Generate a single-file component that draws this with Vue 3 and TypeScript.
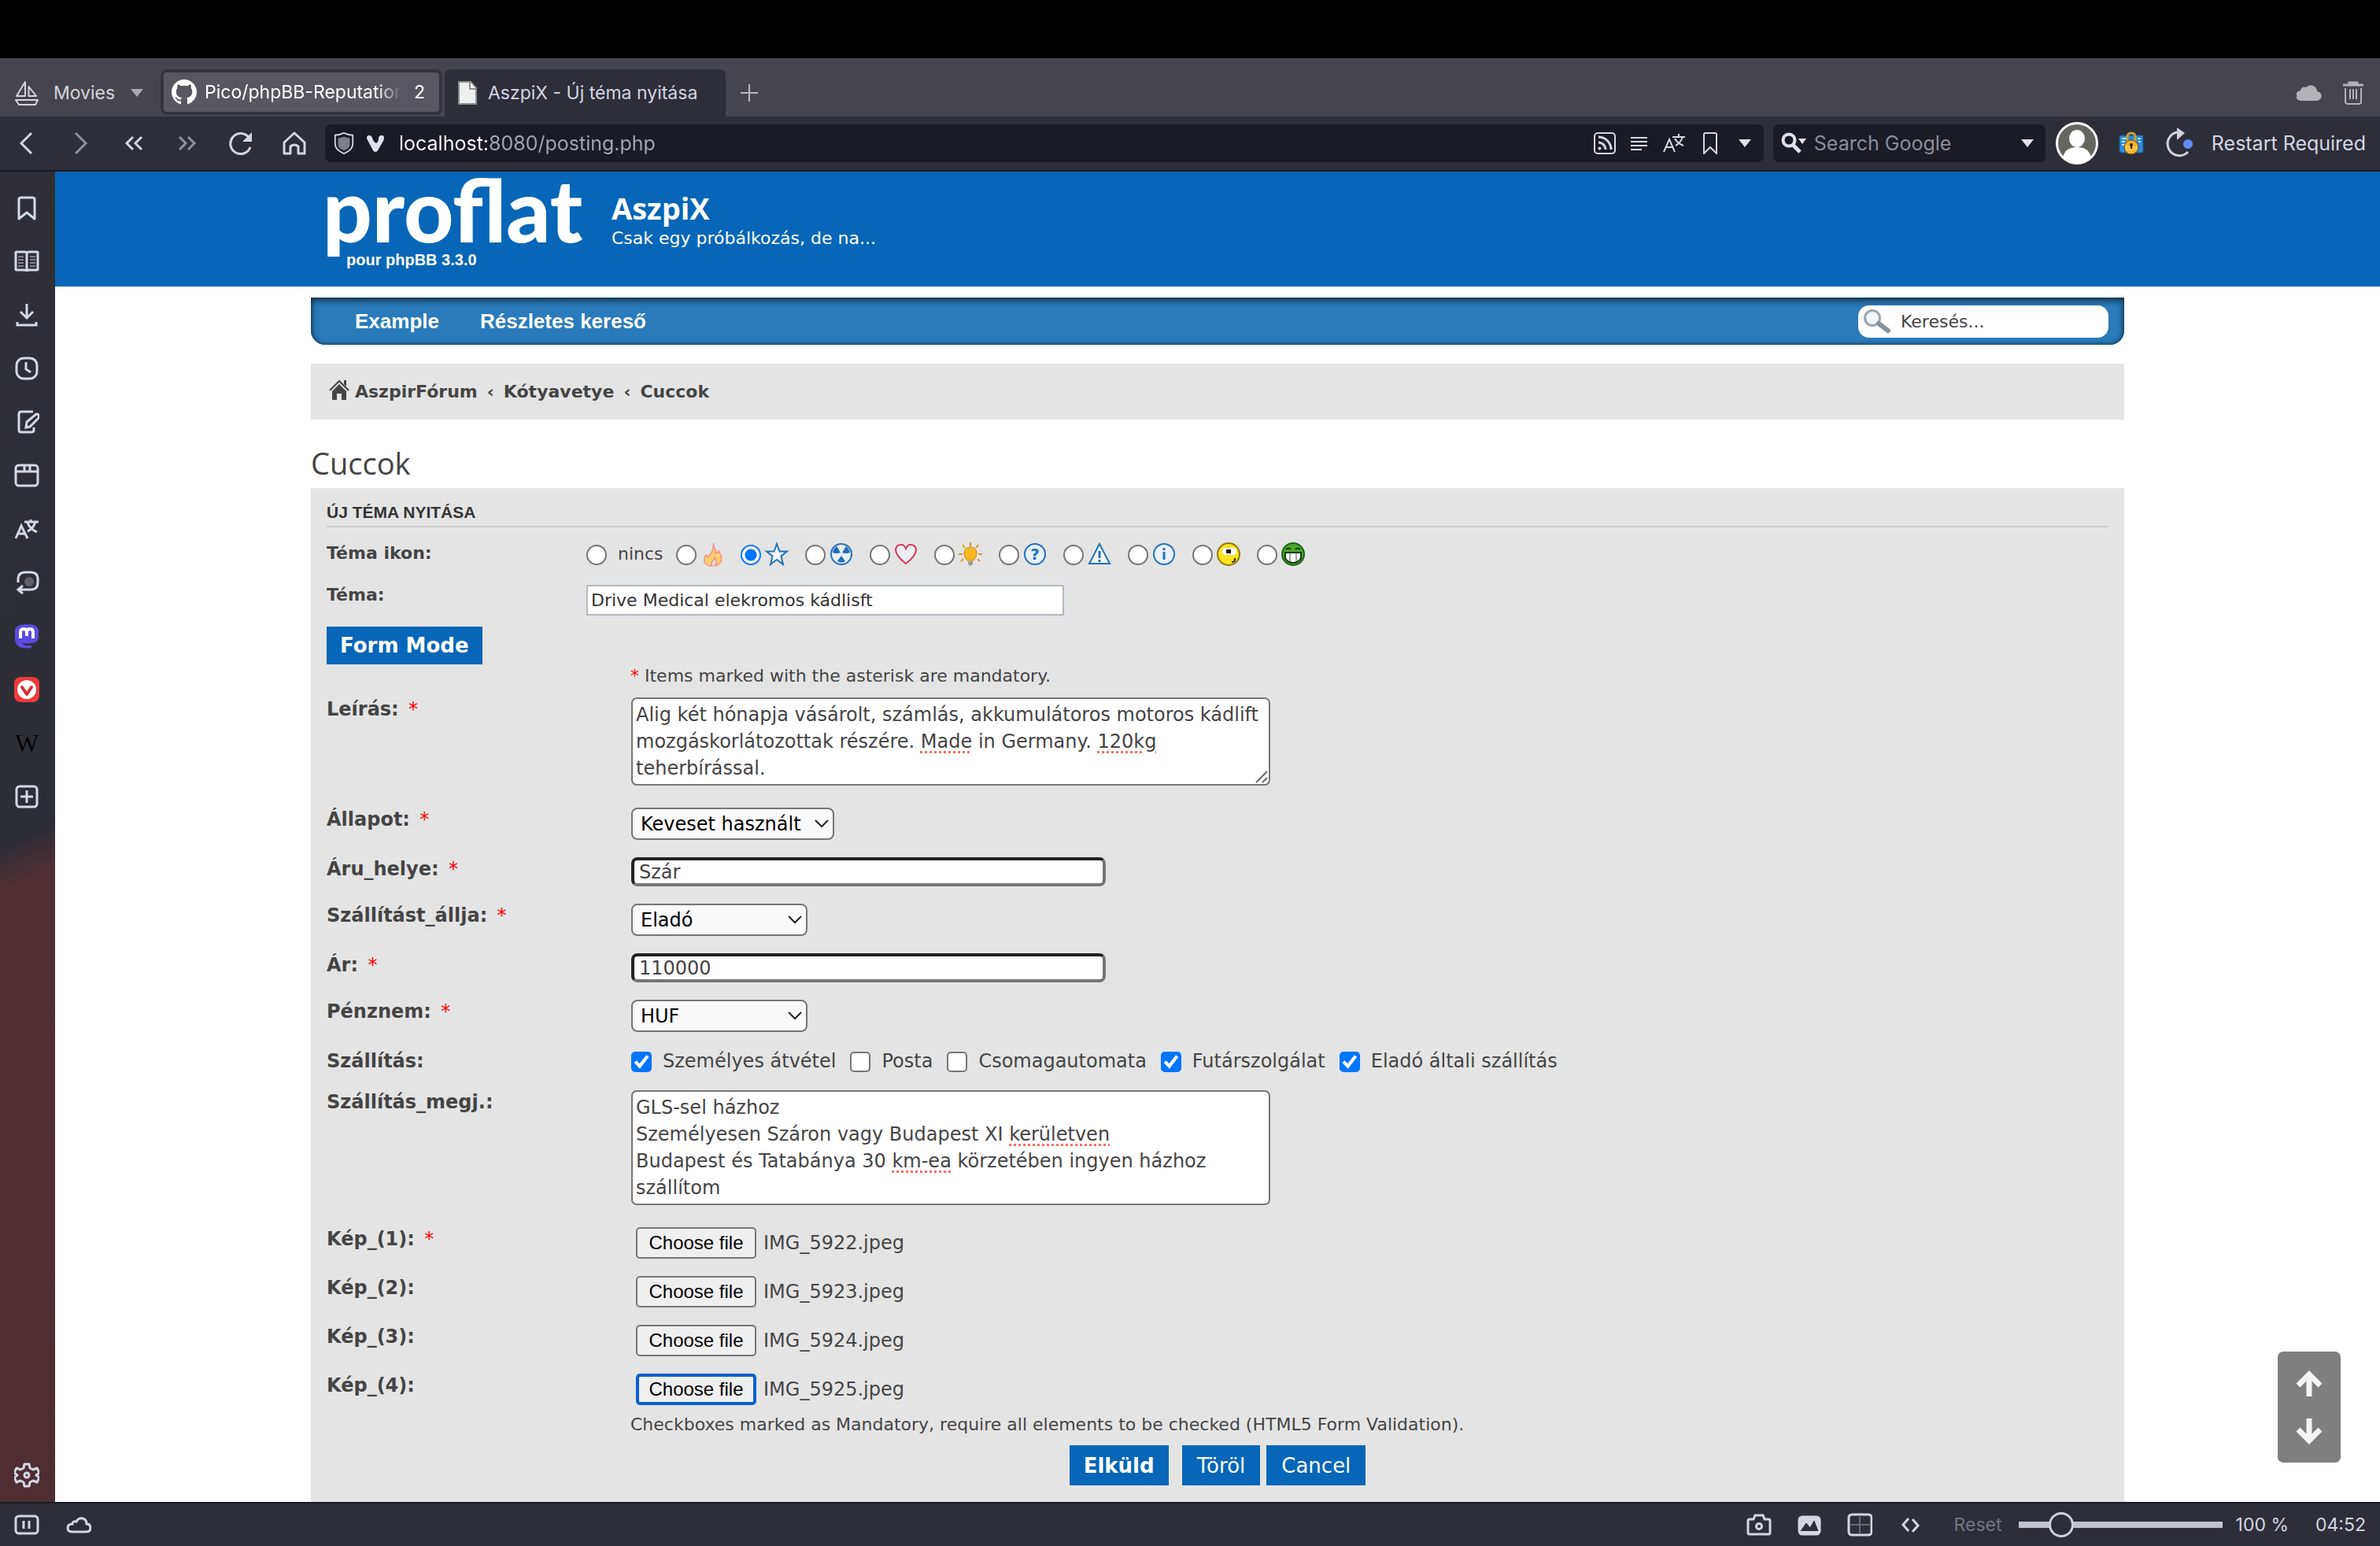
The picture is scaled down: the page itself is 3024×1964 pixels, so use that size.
<script setup lang="ts">
import { ref } from 'vue'

interface Shipping {
  label: string
  checked: boolean
}
interface FileRow {
  label: string
  required: boolean
  name: string
  focused: boolean
}

const tabTitle = ref('Drive Medical elekromos kádlisft')
const url = ref('localhost:8080/posting.php')
const topicIcon = ref('star')
const topicIcons: string[] = ['fire', 'star', 'radioactive', 'heart', 'idea', 'question', 'alert', 'info', 'smile', 'grin']
const place = ref('Szár')
const price = ref('110000')
const shipping = ref<Shipping[]>([
  { label: 'Személyes átvétel', checked: true },
  { label: 'Posta', checked: false },
  { label: 'Csomagautomata', checked: false },
  { label: 'Futárszolgálat', checked: true },
  { label: 'Eladó általi szállítás', checked: true },
])
const description = ref(
  'Alig két hónapja vásárolt, számlás, akkumulátoros motoros kádlift mozgáskorlátozottak részére. Made in Germany. 120kg teherbírással.',
)
const shippingNote = ref(
  'GLS-sel házhoz\nSzemélyesen Száron vagy Budapest XI kerületven\nBudapest és Tatabánya 30 km-ea körzetében ingyen házhoz szállítom',
)
const files: FileRow[] = [
  { label: 'Kép_(1):', required: true, name: 'IMG_5922.jpeg', focused: false },
  { label: 'Kép_(2):', required: false, name: 'IMG_5923.jpeg', focused: false },
  { label: 'Kép_(3):', required: false, name: 'IMG_5924.jpeg', focused: false },
  { label: 'Kép_(4):', required: false, name: 'IMG_5925.jpeg', focused: true },
]
const misspelled = ['Made', '120kg', 'kerületven', 'km-ea']

function spell(text: string): { text: string; bad: boolean }[] {
  return text.split(/(\s+|\.)/).map((part) => ({ text: part, bad: misspelled.includes(part) }))
}
</script>

<template>
  <div class="browser">
    <div class="notch"></div>

    <header class="tabs">
      <button class="workspace" type="button">
        <svg class="i32" viewBox="0 0 32 32" fill="none" stroke="currentColor" stroke-width="2">
          <path d="M14 2v18H3zM18.500 8v12H28zM2 25h28l-3 6H6z" stroke-linejoin="round" />
        </svg>
        <span>Movies</span>
        <svg class="tri" viewBox="0 0 16 12"><path d="M0 1h16L8 11z" fill="#a9a8ad" /></svg>
      </button>
      <button class="tab stacked" type="button">
        <span class="tab-face">
          <svg class="i32" viewBox="0 0 16 16" fill="#fff">
            <path d="M8 0C3.580 0 0 3.580 0 8c0 3.540 2.290 6.530 5.470 7.590.4.070.55-.17.55-.38 0-.19-.01-.82-.01-1.490-2.010.37-2.530-.49-2.690-.94-.09-.23-.48-.94-.82-1.130-.28-.15-.68-.52-.01-.53.63-.01 1.080.58 1.230.82.72 1.210 1.870.87 2.330.66.07-.52.28-.87.51-1.070-1.780-.2-3.640-.89-3.640-3.950 0-.87.31-1.590.82-2.150-.08-.2-.36-1.020.08-2.120 0 0 .67-.21 2.200.82.64-.18 1.320-.27 2-.27s1.360.09 2 .27c1.530-1.040 2.200-.82 2.200-.82.44 1.100.16 1.920.08 2.120.51.56.82 1.270.82 2.150 0 3.070-1.870 3.750-3.650 3.950.29.25.54.73.54 1.480 0 1.070-.01 1.930-.01 2.200 0 .21.15.46.55.38A8.010 8.010 0 0 0 16 8c0-4.420-3.580-8-8-8z" />
          </svg>
          <span class="tab-text fade">Pico/phpBB-Reputation</span>
          <span class="tab-count">2</span>
        </span>
      </button>
      <button class="tab active" type="button">
        <svg class="page-icon" viewBox="0 0 24 30">
          <path d="M1 1h15l7 8v20H1z" fill="#eee" stroke="#8d8d8d" stroke-width="2" />
          <path d="M15 1v9h8" fill="#fff" stroke="#8d8d8d" stroke-width="2" />
        </svg>
        <span class="tab-text">AszpiX - Új téma nyitása</span>
      </button>
      <button class="newtab" type="button" aria-label="New tab">
        <svg class="i24" viewBox="0 0 24 24"><path d="M12 1v22M1 12h22" stroke="#b9b8be" stroke-width="2" /></svg>
      </button>
      <div class="tabs-right">
        <svg class="i32" viewBox="0 0 32 32" fill="#b3b3b7"><path d="M7 26a7 6.500 0 0 1-2-13 5 5 0 0 1 7-4 8 8 0 0 1 14 5 6 6 0 0 1-1 12z" /></svg>
        <svg class="i32" viewBox="0 0 32 32" fill="none" stroke="#b3b3b7" stroke-width="2">
          <path d="M3 6h26M11 5V3h10v2" stroke-width="3" /><path d="M6 10v17q0 3 3 3h14q3 0 3-3V10M12 11v13M16 11v13M20 11v13" />
        </svg>
      </div>
    </header>

    <nav class="toolbar">
      <div class="nav-buttons">
        <button type="button" aria-label="Back"><svg class="i32" viewBox="0 0 32 32"><path d="M22 3 9 16l13 13" /></svg></button>
        <button type="button" aria-label="Forward" class="dim"><svg class="i32" viewBox="0 0 32 32"><path d="m10 3 13 13-13 13" /></svg></button>
        <button type="button" aria-label="Rewind"><svg class="i32" viewBox="0 0 32 32"><path d="m15 8-8 8 8 8M26 8l-8 8 8 8" /></svg></button>
        <button type="button" aria-label="Fast forward" class="dim"><svg class="i32" viewBox="0 0 32 32"><path d="m6 8 8 8-8 8M17 8l8 8-8 8" /></svg></button>
        <button type="button" aria-label="Reload"><svg class="i32" viewBox="0 0 32 32"><path d="M26 8.500A13 13 0 1 0 28 21" /><path d="M30 2v12H18z" fill="currentColor" stroke="none" /></svg></button>
        <button type="button" aria-label="Home"><svg class="i32" viewBox="0 0 32 32"><path d="M3 15 16 3l13 12v14h-8v-9q-5-4-10 0v9H3z" stroke-linejoin="round" /></svg></button>
      </div>
      <div class="field address">
        <svg class="i28" viewBox="0 0 28 30"><path d="M14 1c4 2 8 3 12 3v12c0 6-5 10-12 13C7 26 2 22 2 16V4c4 0 8-1 12-3z" fill="none" stroke="#cfd2de" stroke-width="2" /><path d="M14 6c2 1 5 2 8 2v9c0 4-3 6-8 8-5-2-8-4-8-8V8c3 0 6-1 8-2z" fill="#7d7d87" /></svg>
        <svg class="i24" viewBox="0 0 24 24"><path d="M1 5q0-3 3-3t4 3q1 5 5 7 3-2 3-6 0-4 4-4 3 0 3 3 0 2-1 4l-7 12q-1 2-3 2t-3-2L2 8Q1 6 1 5z" fill="#dfe2ee" /></svg>
        <input v-model="url" class="url" type="text" aria-label="Address" />
        <div class="field-icons">
          <svg class="i30" viewBox="0 0 30 30"><rect x="2" y="2" width="26" height="26" rx="4" /><path d="M7 7a16 16 0 0 1 16 16M7 14a9 9 0 0 1 9 9" stroke-width="3" /><circle cx="8.500" cy="21.500" r="2" fill="currentColor" stroke="none" /></svg>
          <svg class="i24" viewBox="0 0 24 24"><path d="M1 5h21M1 10h21M1 15h21M1 20h14" /></svg>
          <svg class="i30" viewBox="0 0 30 30"><path d="m2 26 7-16 7 16M5 20h8M13 7h16M21 3v4M26 7q-3 8-9 11M16 9q3 6 11 9" /></svg>
          <svg class="i28" viewBox="0 0 28 28"><path d="M6 3q0-2 2-2h12q2 0 2 2v24l-8-8-8 8z" /></svg>
          <svg class="tri" viewBox="0 0 16 12"><path d="M0 1h16L8 11z" fill="#dfe2ee" stroke="none" /></svg>
        </div>
      </div>
      <div class="field search">
        <svg class="i32" viewBox="0 0 32 30"><circle cx="10" cy="11" r="7.500" fill="none" stroke="#dfe2ee" stroke-width="4" /><path d="m15 17 9 9" stroke="#dfe2ee" stroke-width="5" /><path d="M22 9h10l-5 7z" fill="#dfe2ee" /></svg>
        <input type="text" placeholder="Search Google" aria-label="Search Google" />
        <svg class="tri" viewBox="0 0 16 12"><path d="M0 1h16L8 11z" fill="#dfe2ee" /></svg>
      </div>
      <svg class="avatar" viewBox="0 0 54 54"><circle cx="27" cy="27" r="25.500" fill="#666560" stroke="#fff" stroke-width="3" /><ellipse cx="27" cy="21" rx="10" ry="11" fill="#fff" /><path d="M9 45q3-13 18-13t18 13q-7 8-18 8T9 45z" fill="#fff" /></svg>
      <svg class="lock" viewBox="0 0 32 32">
        <rect x="1" y="6" width="30" height="22" rx="2" fill="#2b8ad8" stroke="#16518a" /><path d="M4 10h6M4 14h4M4 18h4M24 10h4M25 14h3" stroke="#bfe3ff" stroke-width="2" />
        <path d="M11 15V8q0-5 5-5t5 5v7" fill="none" stroke="#c7a436" stroke-width="3" /><circle cx="16" cy="21" r="9" fill="#f5b32c" stroke="#6f4a05" /><path d="M9 24h14M8 21h16" stroke="#ffe08a" /><circle cx="16" cy="18" r="2" fill="#3a2600" /><path d="M16 18v5" stroke="#3a2600" stroke-width="2" />
      </svg>
      <button class="restart" type="button">
        <svg class="i40" viewBox="0 0 40 40"><path d="M18 6A15 15 0 1 0 32 31" fill="none" stroke="#cfd2de" stroke-width="3" /><path d="m18 0 10 7-10 9z" fill="#cfd2de" /><circle cx="32" cy="21" r="6" fill="#5f8dfb" /></svg>
        <span>Restart Required</span>
      </button>
    </nav>

    <div class="middle">
      <aside class="panelbar">
        <button type="button" aria-label="Bookmarks"><svg viewBox="0 0 32 32"><path d="M6 5q0-2 3-2h14q3 0 3 2v25l-10-8-10 8z" stroke-linejoin="round" /></svg></button>
        <button type="button" aria-label="Reading list"><svg viewBox="0 0 32 32"><path d="M3 4h10q3 0 3 2 0-2 3-2h10q1 0 1 1v21q0 1-1 1H19q-3 0-3 2 0-2-3-2H3q-1 0-1-1V5q0-1 1-1zM16 6v22" /><path d="M5 10h7M5 14h7M5 18h7M5 22h7M20 10h7M20 14h7M20 18h7M20 22h7" stroke="#80808a" stroke-width="2" /></svg></button>
        <button type="button" aria-label="Downloads"><svg viewBox="0 0 32 32"><path d="M16 2v18M8 12l8 8 8-8M4 25v4h24v-4" /></svg></button>
        <button type="button" aria-label="History"><svg viewBox="0 0 32 32"><rect x="3" y="3" width="26" height="26" rx="9" /><path d="M15 8v9l6 4" /></svg></button>
        <button type="button" aria-label="Notes"><svg viewBox="0 0 32 32"><path d="M24 3H9Q6 3 6 6v20q0 3 3 3h13q3 0 3-3v-3M15 23l1-7L28 6q5 0 3 5L20 22z" /></svg></button>
        <button type="button" aria-label="Window"><svg viewBox="0 0 32 32"><rect x="2" y="3" width="28" height="26" rx="4" /><path d="M2 11h28M13 4v7M20 4v7" /></svg></button>
        <button type="button" aria-label="Translate"><svg viewBox="0 0 32 32"><path d="m2 28 7-16 8 16M5 22h9M13 7h18M21 4v3M27 7q-3 9-10 12M17 8q3 8 12 12" /></svg></button>
        <button type="button" aria-label="Sessions"><svg viewBox="0 0 32 32"><path d="M5 16v-4q0-9 9-9h7q9 0 9 9v4q0 9-9 9H6M11 20l-6 5 6 5" /><circle cx="19" cy="15" r="6" fill="#60606a" stroke="none" /></svg></button>
        <button type="button" aria-label="Mastodon"><svg viewBox="0 0 32 32"><path d="M1 10Q1 1 16 1t15 9v6q0 9-9 9-6 1-11 0 1 4 11 3v3Q2 34 1 20z" fill="#5b4be0" stroke="none" /><path d="M8 19v-8q0-4 4-4t4 4v5-5q0-4 4-4t4 4v8" stroke="#fff" stroke-width="4" /></svg></button>
        <button type="button" aria-label="Vivaldi"><svg viewBox="0 0 32 32"><rect width="32" height="32" rx="8" fill="#ef3a3a" stroke="none" /><circle cx="16" cy="16" r="12" fill="#fff" stroke="none" /><path d="m10 13 6 9 6-9" stroke="#d92f33" stroke-width="4" stroke-linecap="round" stroke-linejoin="round" /></svg></button>
        <button type="button" class="wiki" aria-label="Wikipedia">W</button>
        <button type="button" aria-label="Add panel"><svg viewBox="0 0 32 32"><rect x="3" y="3" width="26" height="26" rx="4" /><path d="M16 8v16M8 16h16" /></svg></button>
        <button type="button" class="settings" aria-label="Settings"><svg viewBox="0 0 32 32"><path d="M13 2h6l1 5 4 2 5-2 3 6-4 3 4 3-3 6-5-2-4 2-1 5h-6l-1-5-4-2-5 2-3-6 4-3-4-3 3-6 5 2 4-2z" stroke-linejoin="round" /><circle cx="16" cy="16" r="3" /></svg></button>
      </aside>

      <main class="page">
        <div class="headerbar">
          <div class="wrap brand">
            <a href="#" class="logo">
              <span class="logo-word">proflat</span>
              <span class="logo-sub">pour phpBB 3.3.0</span>
            </a>
            <div class="site">
              <h1>AszpiX</h1>
              <p>Csak egy próbálkozás, de na...</p>
            </div>
          </div>
        </div>

        <div class="wrap body">
          <nav class="menu">
            <a href="#">Example</a>
            <a href="#">Részletes kereső</a>
            <div class="forum-search">
              <svg class="i36" viewBox="0 0 36 32"><circle cx="12" cy="12" r="9.500" fill="#f3f6f8" stroke="#9aa5ac" stroke-width="3" /><path d="m20 19 12 9" stroke="#87929a" stroke-width="6" stroke-linecap="round" /></svg>
              <input type="search" placeholder="Keresés..." aria-label="Keresés" />
            </div>
          </nav>

          <nav class="crumbs">
            <svg class="house" viewBox="0 0 26 26" fill="#444"><path d="M13 6 22 15v11h-6v-8h-6v8H4V15z" /><path d="M1 14 13 2l12 12" fill="none" stroke="#444" stroke-width="2" /><path d="M19 1h3v8l-3-3z" /></svg>
            <a href="#">AszpirFórum</a><span class="sep">‹</span><a href="#">Kótyavetye</a><span class="sep">‹</span><a href="#">Cuccok</a>
          </nav>

          <h2>Cuccok</h2>

          <form class="panel" @submit.prevent>
            <h3>Új téma nyitása</h3>

            <div class="row icons-row">
              <span class="label">Téma ikon:</span>
              <div class="icon-list">
                <label class="icon-choice none"><input v-model="topicIcon" type="radio" name="icon" value="none" /><span>nincs</span></label>
                <label v-for="name in topicIcons" :key="name" class="icon-choice">
                  <input v-model="topicIcon" type="radio" name="icon" :value="name" :aria-label="name" />
                  <svg class="i32" viewBox="0 0 32 32">
                    <g v-if="name === 'fire'"><path d="M18 2q-1 5 2 8 1 3 0 5 3 0 4-3 5 7 3 13-2 5-8 6 4-5 0-11-1 4-3 5-2 3 0 6-8 0-10-5-1-6 2-9l2 3q6-6 7-11 0-4 1-7z" fill="#ffcf6b" stroke="#f0938a" stroke-width="1.500" /></g>
                    <path v-else-if="name === 'star'" d="m16 3 3.500 9.500H29l-7.500 6L24 29l-8-6-8 6 2.500-10.500L3 12.500h9.500z" fill="#f4f6fa" stroke="#2272b8" stroke-width="2" />
                    <g v-else-if="name === 'radioactive'"><circle cx="16" cy="16" r="13" fill="#e8f0f8" stroke="#2272b8" stroke-width="2" /><path d="M15 14 10 6q-4 3-5 8 5 2 10 0zM17 14l5-8q4 3 5 8-5 2-10 0zM16 18l-5 7q5 3 10 0z" fill="#1f6db4" /></g>
                    <path v-else-if="name === 'heart'" d="M16 28Q3 18 3 10q1-6 7-6 4 0 6 5 2-5 6-5 6 0 7 6 0 8-13 18z" fill="#eceef2" stroke="#d0385b" stroke-width="2" />
                    <g v-else-if="name === 'idea'"><path d="M16 1v5M6 4l3 4M26 4l-3 4M1 16h5M26 16h5M4 25l3-3M28 25l-3-3" stroke="#d79a2a" stroke-width="2" /><path d="M8 15q0-8 8-8t8 8q0 5-4 9h-8q-4-4-4-9z" fill="#f9b824" stroke="#c98b17" /><path d="M13 25h6v4l-3 2-3-2z" fill="#9a9a9a" /></g>
                    <g v-else-if="name === 'question'"><circle cx="16" cy="16" r="13" fill="#e8f0f8" stroke="#2272b8" stroke-width="2" /><text x="16" y="23" text-anchor="middle" class="glyph">?</text></g>
                    <g v-else-if="name === 'alert'"><path d="M16 3 29 28H3z" fill="#f4f6fa" stroke="#2272b8" stroke-width="2" /><path d="M16 12v9M16 23v3" stroke="#2272b8" stroke-width="3" /></g>
                    <g v-else-if="name === 'info'"><circle cx="16" cy="16" r="13" fill="#e8f0f8" stroke="#2272b8" stroke-width="2" /><path d="M16 13v10M16 8v3" stroke="#2272b8" stroke-width="3" /></g>
                    <g v-else-if="name === 'smile'"><circle cx="16" cy="16" r="14" fill="#ffe11c" stroke="#8a7a10" stroke-width="2" /><rect x="8" y="8" width="18" height="9" rx="4" fill="#fff" /><rect x="13" y="10" width="6" height="5" fill="#111" /><path d="M20 26q5 0 4-5" fill="none" stroke="#222" stroke-width="2" /></g>
                    <g v-else><circle cx="16" cy="16" r="14" fill="#4ea72c" stroke="#1d6413" stroke-width="2" /><path d="M7 10q3-3 6 0M19 10q3-3 6 0" fill="none" stroke="#0d3b08" stroke-width="2" /><path d="M6 14h20v7q-3 6-10 6T6 21z" fill="#fff" stroke="#123d0c" stroke-width="2" /><path d="M12 14v12M20 14v12" stroke="#555" /></g>
                  </svg>
                </label>
              </div>
            </div>

            <div class="row subject-row">
              <label class="label" for="subject">Téma:</label>
              <input id="subject" v-model="tabTitle" class="subject" type="text" />
            </div>

            <button class="btn mode" type="button">Form Mode</button>

            <p class="note mandatory"><span class="req">*</span> Items marked with the asterisk are mandatory.</p>

            <div class="fields">
              <div class="row area-row">
                <label class="label" for="desc">Leírás: <span class="req">*</span></label>
                <div class="area">
                  <textarea id="desc" v-model="description" rows="3" spellcheck="false"></textarea>
                  <div class="marks" aria-hidden="true"><span v-for="(p, i) in spell(description)" :key="i" :class="{ bad: p.bad }">{{ p.text }}</span></div>
                  <svg class="grip" viewBox="0 0 16 16"><path d="M1 15 15 1M9 15l6-6" stroke="#666" stroke-width="2" /></svg>
                </div>
              </div>
              <div class="row">
                <label class="label" for="state">Állapot: <span class="req">*</span></label>
                <div class="select wide">
                  <select id="state"><option>Keveset használt</option></select>
                  <svg viewBox="0 0 18 12"><path d="m1 2 8 8 8-8" /></svg>
                </div>
              </div>
              <div class="row">
                <label class="label" for="place">Áru_helye: <span class="req">*</span></label>
                <input id="place" v-model="place" class="text" type="text" />
              </div>
              <div class="row">
                <label class="label" for="payer">Szállítást_állja: <span class="req">*</span></label>
                <div class="select">
                  <select id="payer"><option>Eladó</option></select>
                  <svg viewBox="0 0 18 12"><path d="m1 2 8 8 8-8" /></svg>
                </div>
              </div>
              <div class="row">
                <label class="label" for="price">Ár: <span class="req">*</span></label>
                <input id="price" v-model="price" class="text" type="text" />
              </div>
              <div class="row">
                <label class="label" for="currency">Pénznem: <span class="req">*</span></label>
                <div class="select">
                  <select id="currency"><option>HUF</option></select>
                  <svg viewBox="0 0 18 12"><path d="m1 2 8 8 8-8" /></svg>
                </div>
              </div>
              <div class="row">
                <span class="label">Szállítás:</span>
                <div class="checks">
                  <label v-for="s in shipping" :key="s.label"><input v-model="s.checked" type="checkbox" />{{ s.label }}</label>
                </div>
              </div>
              <div class="row area-row">
                <label class="label" for="shipnote">Szállítás_megj.:</label>
                <div class="area">
                  <textarea id="shipnote" v-model="shippingNote" class="fixed" rows="4" spellcheck="false"></textarea>
                  <div class="marks" aria-hidden="true"><span v-for="(p, i) in spell(shippingNote)" :key="i" :class="{ bad: p.bad }">{{ p.text }}</span></div>
                </div>
              </div>
              <div v-for="(f, i) in files" :key="f.name" class="row">
                <label class="label" :for="'file' + i">{{ f.label }} <span v-if="f.required" class="req">*</span></label>
                <div class="file">
                  <input :id="'file' + i" type="file" class="file-input" />
                  <label :for="'file' + i" class="file-button" :class="{ focused: f.focused }">Choose file</label>
                  <span>{{ f.name }}</span>
                </div>
              </div>
            </div>

            <p class="note checks-note">Checkboxes marked as Mandatory, require all elements to be checked (HTML5 Form Validation).</p>

            <div class="actions">
              <button class="btn primary" type="submit">Elküld</button>
              <button class="btn" type="reset">Töröl</button>
              <button class="btn" type="button">Cancel</button>
            </div>
          </form>
        </div>

        <div class="scroller">
          <button type="button" aria-label="Scroll up"><svg viewBox="0 0 36 36"><path d="M18 33V6M4 19 18 5l14 14" /></svg></button>
          <button type="button" aria-label="Scroll down"><svg viewBox="0 0 36 36"><path d="M18 3v27M4 17l14 14 14-14" /></svg></button>
        </div>
      </main>
    </div>

    <footer class="status">
      <svg class="i32" viewBox="0 0 32 32"><rect x="2" y="5" width="28" height="22" rx="4" /><path d="M12 11v10M19 11v10" /></svg>
      <svg class="i32" viewBox="0 0 32 32"><path d="M8 25q-6 0-6-5t6-5q0-4 5-3 3-5 8-4t5 7q5 0 5 5t-6 5z" /></svg>
      <div class="status-right">
        <svg class="i32" viewBox="0 0 32 32"><path d="M4 9h5l2-5h10l2 5h5q2 0 2 2v15q0 2-2 2H4q-2 0-2-2V11q0-2 2-2z" /><circle cx="16" cy="18" r="3.500" /></svg>
        <svg class="i32" viewBox="0 0 32 32"><rect x="3" y="6" width="26" height="22" rx="4" fill="currentColor" /><path d="m5 24 7-10 5 6 5-9 5 13" stroke="#2e2e38" fill="#2e2e38" stroke-width="1" /></svg>
        <svg class="i32" viewBox="0 0 32 32"><rect x="2" y="3" width="29" height="26" rx="4" /><path d="M16 4v24M3 16h27" stroke="#696973" stroke-width="2" /></svg>
        <svg class="i32" viewBox="0 0 32 32"><path d="m14 8-7 8 7 8M19 9l7 8-7 8" /></svg>
        <button type="button" class="reset">Reset</button>
        <input class="zoom" type="range" min="0" max="100" value="17" aria-label="Zoom" />
        <span class="percent">100 %</span>
        <span>04:52</span>
      </div>
    </footer>
  </div>
</template>

<style>
body {
  background: #fff;
}
</style>

<style scoped>
* {
  box-sizing: border-box;
}
.browser {
  height: 100vh;
  display: flex;
  flex-direction: column;
  font-family: "DejaVu Sans", Verdana, sans-serif;
  font-size: 24px;
  color: #444;
}
button,
input {
  font: inherit;
}
button {
  border: 0;
  background: none;
  padding: 0;
  color: inherit;
}
svg {
  display: block;
  flex: none;
}
p, h1, h2, h3 {
  margin: 0;
}
.i24 { width: 24px; height: 24px; }
.i28 { width: 28px; height: 28px; }
.i30 { width: 30px; height: 30px; }
.i32 { width: 32px; height: 32px; }
.i36 { width: 36px; height: 32px; }
.i40 { width: 40px; height: 40px; }
.tri { width: 16px; height: 12px; }

.notch {
  flex: none;
  height: 74px;
  background: #000;
}
.tabs,
.toolbar,
.status {
  flex: none;
  font-family: Inter, sans-serif;
  font-size: 23px;
  color: #d3d6e2;
}
.tabs {
  height: 74px;
  display: flex;
  align-items: flex-end;
  background: #46454d;
  padding-left: 18px;
}
.workspace {
  display: flex;
  align-items: center;
  width: 186px;
  height: 60px;
  color: #d6d5da;
}
.workspace span {
  margin-left: 18px;
  margin-right: auto;
}
.workspace .tri {
  margin-right: 22px;
}
.tab {
  height: 60px;
  display: flex;
  align-items: center;
}
.tab.stacked {
  width: 358px;
  padding-bottom: 2px;
}
.tab-face {
  display: flex;
  align-items: center;
  width: 100%;
  height: 58px;
  border: 4px solid #34333c;
  border-radius: 8px;
  background: #58575f;
  padding: 0 18px 0 10px;
  color: #fff;
}
.tab.stacked .tab-text {
  width: 250px;
  margin: 0 16px 0 10px;
}
.tab-text {
  white-space: nowrap;
  overflow: hidden;
  text-align: left;
}
.fade {
  -webkit-mask-image: linear-gradient(90deg, #000 220px, transparent 250px);
  mask-image: linear-gradient(90deg, #000 220px, transparent 250px);
}
.tab.active {
  width: 357px;
  margin-left: 3px;
  padding-left: 17px;
  background: #2e2e38;
  border-radius: 8px 8px 0 0;
}
.page-icon {
  width: 24px;
  height: 30px;
  margin-right: 14px;
}
.newtab {
  height: 60px;
  margin-left: 18px;
}
.tabs-right {
  margin-left: auto;
  height: 60px;
  display: flex;
  align-items: center;
  gap: 24px;
  padding-right: 18px;
}

.toolbar {
  height: 70px;
  display: flex;
  align-items: center;
  background: #2e2e38;
  border-bottom: 2px solid #1b1b24;
  padding: 0 18px;
  font-size: 25px;
}
.nav-buttons {
  display: flex;
  gap: 36px;
  margin-right: 23px;
}
.nav-buttons svg,
.field-icons svg {
  fill: none;
  stroke: currentColor;
  stroke-width: 3;
}
.field-icons svg {
  stroke-width: 2;
}
.dim {
  color: #8f909b;
}
.field {
  height: 48px;
  display: flex;
  align-items: center;
  background: #1b1b25;
  border-radius: 8px;
}
.address {
  flex: 1;
  padding: 0 16px 0 10px;
}
.address > .i24 {
  margin: 0 18px 0 14px;
}
.field input {
  flex: 1;
  min-width: 0;
  height: 32px;
  border: 0;
  padding: 0;
  outline: none;
  background: none;
  color: #9a9ba5;
}
.field input::placeholder {
  color: #8c8d97;
  opacity: 1;
}
.field .url {
  color: transparent;
  background: linear-gradient(90deg, #fff 112px, #a5a6b0 112px) text;
  -webkit-background-clip: text;
}
.field-icons {
  display: flex;
  align-items: center;
  gap: 17px;
}
.field-icons .tri {
  margin-left: 5px;
}
.search {
  width: 346px;
  margin: 0 13px 0 12px;
  padding: 0 15px 0 10px;
}
.search input {
  margin-left: 10px;
}
.avatar {
  width: 54px;
  height: 54px;
}
.lock {
  width: 32px;
  height: 32px;
  margin: 0 24px 0 26px;
}
.restart {
  display: flex;
  align-items: center;
  gap: 22px;
  white-space: nowrap;
}

.middle {
  flex: 1;
  min-height: 0;
  display: flex;
}
.panelbar {
  flex: none;
  width: 70px;
  display: flex;
  flex-direction: column;
  align-items: center;
  gap: 36px;
  padding: 30px 2px 18px 0;
  background: linear-gradient(158deg, #302f38 0%, #2d2d36 50%, #502e34 53%, #4f2d32 100%);
  color: #d3d9e6;
}
.panelbar button,
.panelbar svg {
  width: 32px;
  height: 32px;
}
.panelbar svg {
  fill: none;
  stroke: currentColor;
  stroke-width: 3;
}
.panelbar .wiki {
  font: 32px/32px "Liberation Serif", serif;
  color: #050505;
}
.panelbar .settings {
  margin-top: auto;
}

.page {
  position: relative;
  flex: 1;
  min-width: 0;
  overflow: hidden;
  display: flex;
  flex-direction: column;
  background: #fff;
}
.wrap {
  width: 100%;
  max-width: 2304px;
  margin: 0 auto;
}
.headerbar {
  flex: none;
  height: 146px;
  background: #0766b7;
  color: #fff;
}
.brand {
  display: flex;
  padding-left: 15px;
}
.logo {
  display: flex;
  flex-direction: column;
  width: 367px;
  color: #fff;
  text-decoration: none;
}
.logo-word {
  font: 900 110px/94px Lato, sans-serif;
}
.logo-sub {
  padding-left: 30px;
  font: bold 20px/36px "Liberation Sans", Arial, sans-serif;
}
.site {
  padding-top: 22px;
}
.site h1 {
  font: bold 38px/48px "Open Sans", sans-serif;
}
.site p {
  font-size: 22px;
  line-height: 30px;
}
.body {
  flex: 1;
  min-height: 0;
  display: flex;
  flex-direction: column;
}
.menu {
  flex: none;
  height: 60px;
  margin-top: 14px;
  display: flex;
  align-items: center;
  gap: 52px;
  padding: 0 20px 0 56px;
  border-radius: 0 0 18px 18px;
  background: #2b7bba;
  box-shadow: inset 0 3px 10px rgba(0, 0, 0, 0.7), inset 0 -1px 4px rgba(0, 0, 0, 0.3);
}
.menu a {
  font: bold 26px/32px "Liberation Sans", Arial, sans-serif;
  color: #fff;
  text-decoration: none;
}
.forum-search {
  margin-left: auto;
  width: 318px;
  height: 41px;
  display: flex;
  align-items: center;
  padding: 0 6px;
  border-radius: 14px;
  background: #fff;
}
.forum-search input {
  flex: 1;
  min-width: 0;
  height: 32px;
  margin-left: 12px;
  border: 0;
  padding: 0;
  background: none;
  font-size: 22px;
}
.forum-search input::placeholder {
  color: #444;
  opacity: 1;
}
.crumbs {
  flex: none;
  height: 71px;
  margin-top: 24px;
  display: flex;
  align-items: center;
  padding: 0 23px;
  background: #e4e4e4;
  font-size: 22px;
  font-weight: bold;
}
.crumbs a {
  color: #444;
  text-decoration: none;
}
.house {
  width: 26px;
  height: 26px;
  margin-right: 7px;
  margin-bottom: 6px;
}
.sep {
  margin: 0 12px;
}
h2 {
  flex: none;
  padding: 29px 0 6px;
  font: 38px/52px "Open Sans", sans-serif;
}
.panel {
  flex: 1;
  padding: 16px 20px 20px;
  background: #e4e4e4;
}
h3 {
  font: bold 21px/30px "Liberation Sans", Arial, sans-serif;
  text-transform: uppercase;
  color: #333;
  padding-bottom: 2px;
  border-bottom: 2px solid #ccc;
}
.row {
  display: flex;
  align-items: flex-start;
}
.label {
  flex: none;
  width: 387px;
  line-height: 30px;
  font-weight: bold;
}
.req {
  color: #f00;
  font-weight: normal;
}
.label .req {
  margin-left: 4px;
}
.icons-row,
.subject-row {
  font-size: 22px;
}
.icons-row .label,
.subject-row .label {
  width: 330px;
}
.icons-row {
  margin-top: 18px;
}
.icon-list {
  display: flex;
  gap: 20px;
  line-height: 30px;
}
.icon-choice {
  display: flex;
  align-items: center;
  gap: 4px;
}
.icon-choice.none {
  gap: 14px;
  margin-right: -4px;
}
input[type="radio"] {
  appearance: none;
  flex: none;
  width: 26px;
  height: 26px;
  margin: 2px 0 0;
  border: 2px solid #767676;
  border-radius: 50%;
  background: #fff;
}
input[type="radio"]:checked {
  border-color: #0075ff;
  background: radial-gradient(#0075ff 7px, #fff 8px);
}
.glyph {
  font: bold 20px "DejaVu Sans", sans-serif;
  fill: #2272b8;
}
.subject-row {
  margin-top: 21px;
}
.subject {
  width: 607px;
  height: 39px;
  margin: 2px 0 0;
  padding: 0 4px;
  border: 2px solid #b4bac0;
  background: #fff;
  color: #333;
}
.btn {
  height: 51px;
  padding: 0 19px;
  background: #0766b7;
  color: #fff;
  font-size: 26px;
}
.btn.mode {
  display: block;
  height: 48px;
  padding: 0 17px;
  margin-top: 14px;
  font-weight: bold;
}
.note {
  padding-left: 386px;
  font-size: 22px;
  line-height: 30px;
}
.fields {
  display: flex;
  flex-direction: column;
  gap: 22px;
  margin-top: 12px;
}
.area-row {
  padding-bottom: 6px;
}
.area {
  position: relative;
  width: 812px;
}
textarea,
.marks {
  display: block;
  width: 100%;
  border: 2px solid #767676;
  padding: 3px 4px;
  font: 24px/34px "DejaVu Sans", Verdana, sans-serif;
  white-space: pre-wrap;
  overflow-wrap: break-word;
}
textarea {
  margin: 0;
  border-radius: 7px;
  background: #fff;
  color: #444;
  resize: none;
  overflow: hidden;
}
.marks {
  position: absolute;
  inset: 0;
  border-color: transparent;
  color: transparent;
  pointer-events: none;
}
.bad {
  text-decoration: underline dotted #ff6b66 3px;
  text-underline-offset: 4px;
}
.grip {
  position: absolute;
  right: 3px;
  bottom: 3px;
  width: 16px;
  height: 16px;
}
.select {
  position: relative;
  width: 224px;
}
.select.wide {
  width: 258px;
}
.select select {
  display: block;
  appearance: none;
  width: 100%;
  height: 41px;
  margin: 0;
  padding: 0 36px 0 10px;
  border: 2px solid #767676;
  border-radius: 8px;
  background: #fafafa;
  color: #000;
  font: 24px "DejaVu Sans", Verdana, sans-serif;
}
.select svg {
  position: absolute;
  right: 7px;
  top: 14px;
  width: 18px;
  height: 12px;
  fill: none;
  stroke: #222;
  stroke-width: 2;
  pointer-events: none;
}
.text {
  width: 603px;
  height: 37px;
  margin: 0;
  padding: 0 6px;
  border: 4px solid #767676;
  border-color: #222 #767676 #767676 #222;
  border-radius: 8px;
  background: #fff;
  color: #444;
}
.checks {
  display: flex;
  gap: 18px;
  line-height: 30px;
}
.checks label {
  display: flex;
  align-items: center;
  gap: 14px;
}
input[type="checkbox"] {
  appearance: none;
  position: relative;
  width: 26px;
  height: 26px;
  margin: 2px 0 0;
  border: 2px solid #767676;
  border-radius: 5px;
  background: #fff;
}
input[type="checkbox"]:checked {
  border-color: #0075ff;
  background: #0075ff;
}
input[type="checkbox"]:checked::before {
  content: "";
  position: absolute;
  inset: 0;
  background: #fff;
  clip-path: polygon(8% 54%, 22% 42%, 39% 60%, 78% 10%, 93% 22%, 41% 90%);
}
.file {
  position: relative;
  display: flex;
  align-items: center;
  gap: 9px;
  padding-left: 6px;
}
.file-input {
  position: absolute;
  width: 1px;
  height: 1px;
  opacity: 0;
}
.file-button {
  width: 153px;
  height: 40px;
  border: 2px solid #767676;
  border-radius: 5px;
  background: #efefef;
  color: #000;
  text-align: center;
  font: 24px/36px "Liberation Sans", Arial, sans-serif;
}
.file-button.focused {
  border: 4px solid #0860d2;
  line-height: 32px;
}
.checks-note {
  margin-top: 10px;
}
.actions {
  display: flex;
  justify-content: center;
  gap: 8px;
  margin-top: 11px;
}
.btn.primary {
  padding: 0 18px;
  font-weight: bold;
  margin-right: 9px;
}
.scroller {
  position: absolute;
  right: 50px;
  bottom: 50px;
  width: 80px;
  height: 141px;
  display: flex;
  flex-direction: column;
  align-items: center;
  justify-content: center;
  gap: 22px;
  border-radius: 7px;
  background: #7f7f7f;
}
.scroller svg {
  width: 36px;
  height: 36px;
  fill: none;
  stroke: #f4f4f4;
  stroke-width: 7;
}

.status {
  height: 56px;
  display: flex;
  align-items: center;
  gap: 34px;
  padding: 0 18px;
  background: #2e2e38;
  border-top: 2px solid #1b1b24;
}
.status svg {
  fill: none;
  stroke: currentColor;
  stroke-width: 3;
}
.status-right {
  margin-left: auto;
  display: flex;
  align-items: center;
}
.status-right svg {
  margin-right: 32px;
}
.reset {
  margin-left: 8px;
  color: #73747e;
}
.zoom {
  appearance: none;
  width: 259px;
  height: 34px;
  margin: 0 17px 0 21px;
  background: linear-gradient(#bfc2cf, #bfc2cf) center / 100% 8px no-repeat;
}
.zoom::-webkit-slider-thumb {
  appearance: none;
  width: 32px;
  height: 32px;
  border: 3px solid #cfd2de;
  border-radius: 50%;
  background: #2e2e38;
}
.percent {
  margin-right: 34px;
}
</style>
